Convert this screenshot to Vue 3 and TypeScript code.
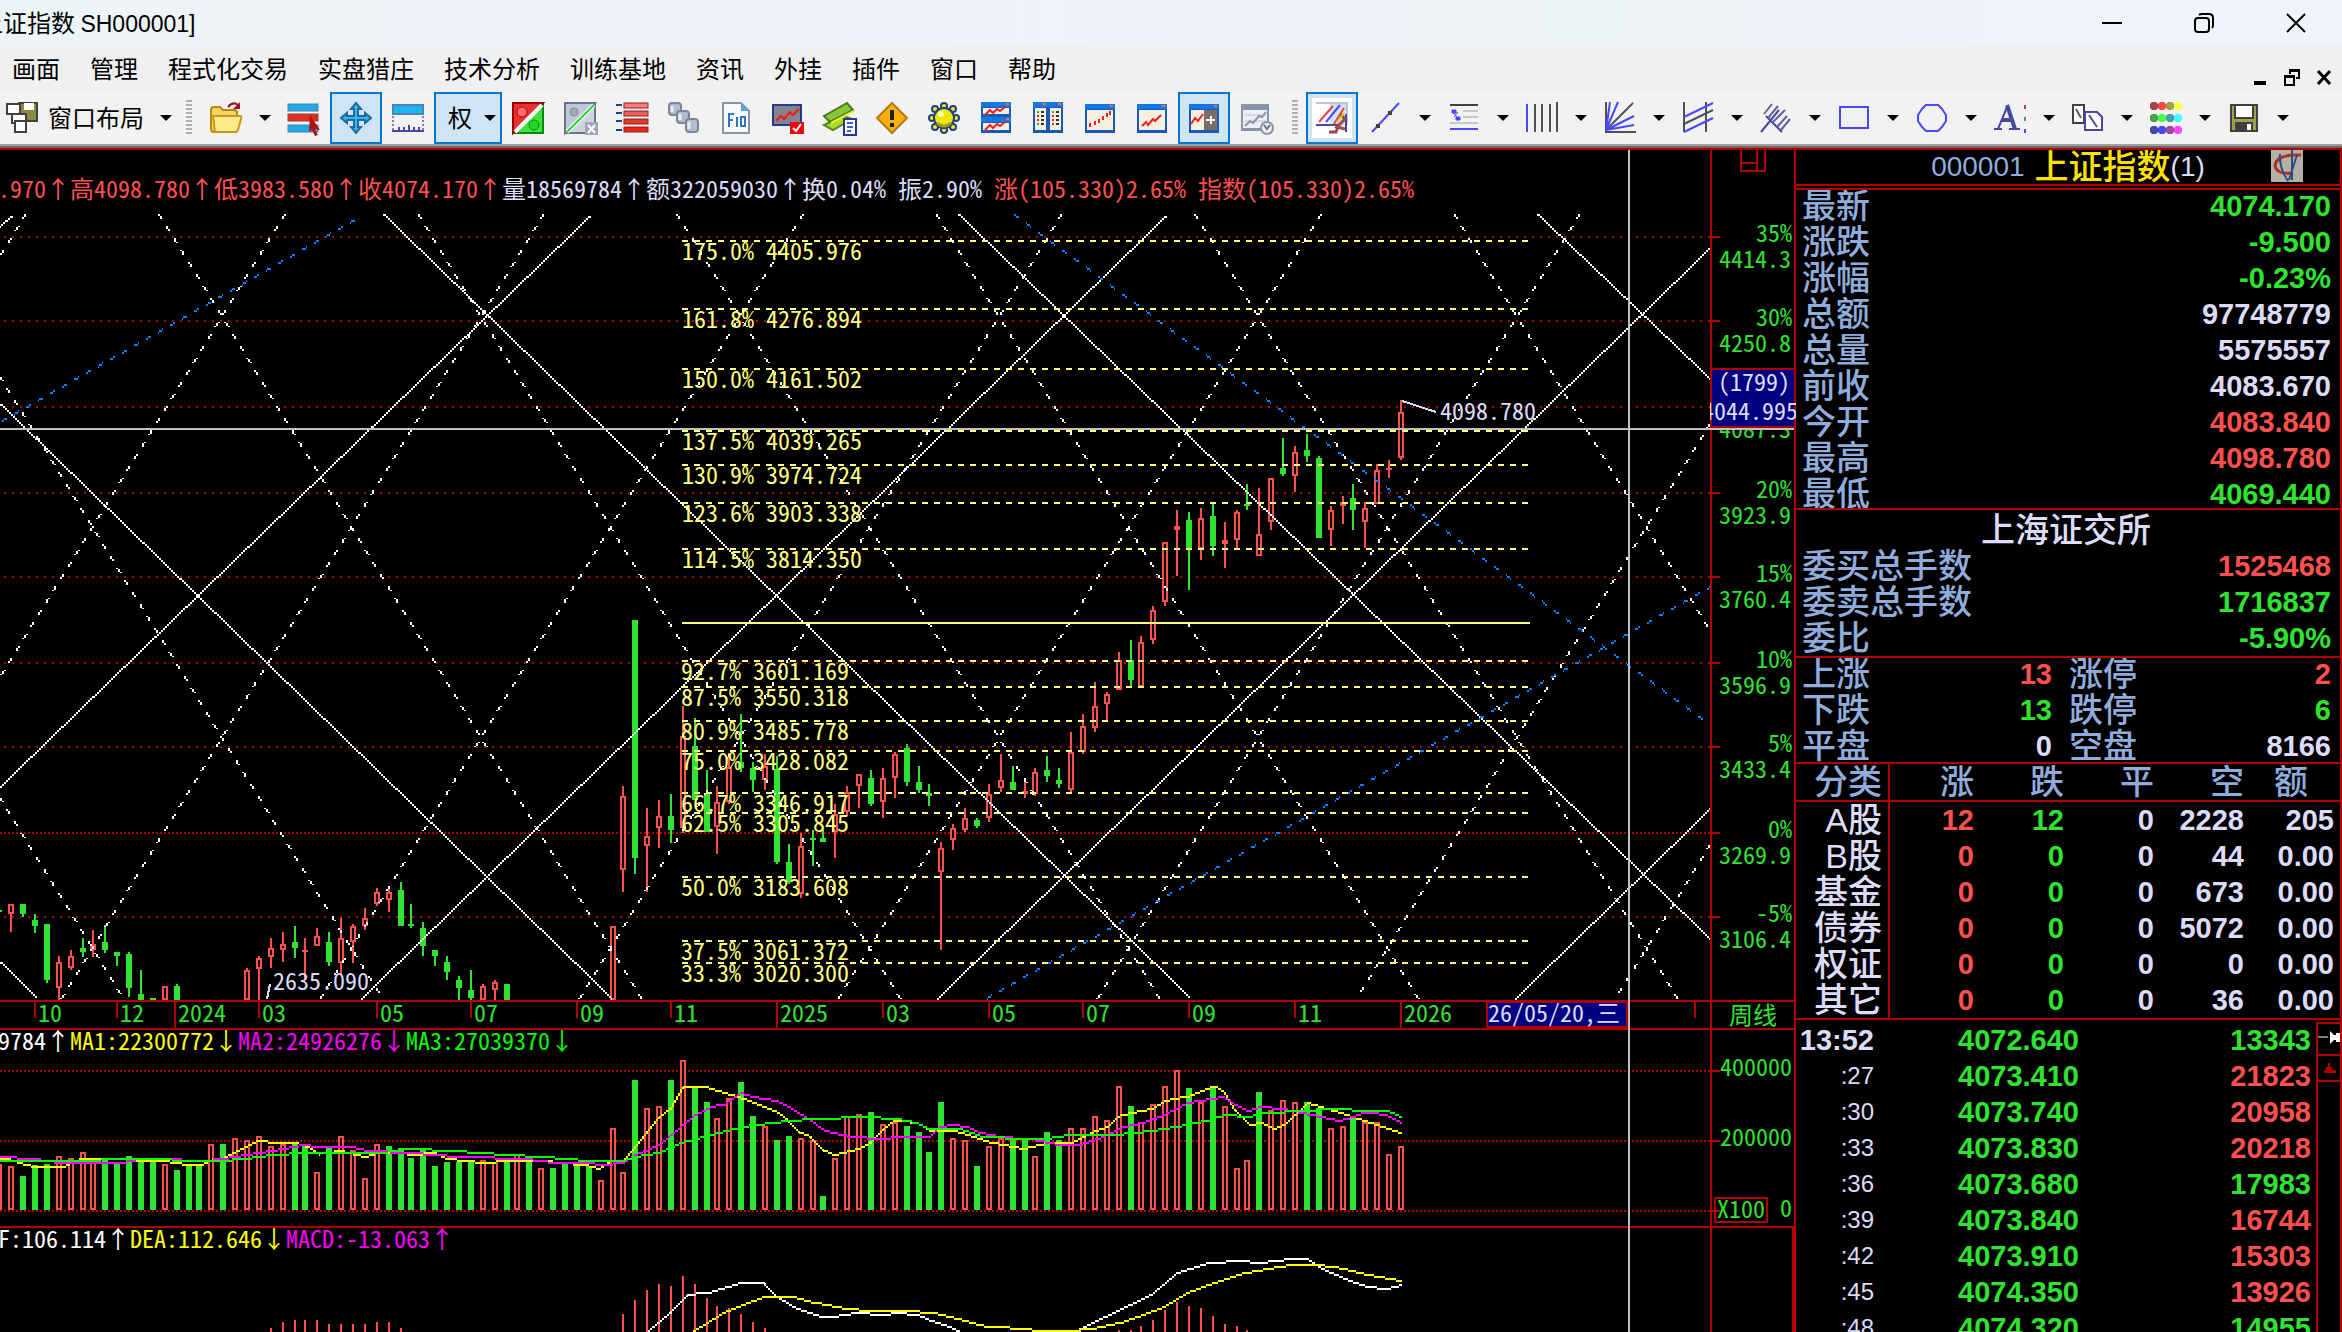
<script setup lang="ts">
interface Candle {
  x: number
  high: number
  top: number
  bottom: number
  low: number
  up: boolean
}

interface Tool {
  id: string
  art: string
  menu?: boolean
  active?: boolean
}

const menus = ['画面', '管理', '程式化交易', '实盘猎庄', '技术分析', '训练基地', '资讯', '外挂', '插件', '窗口', '帮助']

/* ---------- toolbar icons, drawn on a 32 x 32 grid ---------- */
const trend = (x: number, y: number) =>
  `<path d="M${x} ${y + 10}l4-4 2 3 5-6 2 2 6-6" fill="none" stroke="#f02020" stroke-width="2"/>`
const frame = (x: number, y: number, w: number, h: number) =>
  `<rect x="${x}" y="${y}" width="${w}" height="${h}" fill="#1c58b8"/><rect x="${x}" y="${y}" width="${w}" height="5" fill="#1078e0"/><rect x="${x + w - 5}" y="${y + 1}" width="3" height="2" fill="#ff7020"/><rect x="${x + 2}" y="${y + 6}" width="${w - 4}" height="${h - 9}" fill="#f6f0e0"/>`
const percent = (a: string, b: string, c: string, d: string) =>
  `<rect x="1" y="1" width="30" height="30" fill="${b}" stroke="${d}" stroke-width="2"/><path d="M1 31V1h30z" fill="${a}" stroke="${c}" stroke-width="2"/><path d="M3 30L30 3" stroke="#fff" stroke-width="4"/>`
const list = (x: number, y: number, fill: string) =>
  `<rect x="${x}" y="${y}" width="24" height="5" fill="${fill}" stroke="#902020"/>`

const icons: Record<string, string> = {
  layout:
    '<path d="M13 1h18v18H13z" fill="#8c8c40" stroke="#404040" stroke-width="2"/><path d="M18 1h10v7H18z" fill="#fff"/><path d="M1 2h13v10H1z" fill="#fff" stroke="#404040" stroke-width="2"/><path d="M6 12h14v9H6z" fill="#fff" stroke="#404040" stroke-width="2"/><path d="M9 19h11v11H9z" fill="#fff" stroke="#404040" stroke-width="2"/>',
  open:
    '<path d="M1 8q0-3 3-3h6l3 3h11q3 0 3 3v16q0 3-3 3H4q-3 0-3-3z" fill="#f7d560" stroke="#b58a12" stroke-width="2"/><path d="M3 14h27q2 0 1 3l-3 11q-1 2-3 2H5z" fill="#ffe98a" stroke="#c59a18" stroke-width="2"/><path d="M18 5q5-6 10-2" fill="none" stroke="#a01020" stroke-width="2"/><path d="M30 0v7h-7z" fill="#a01020"/>',
  rows:
    '<rect y="2" width="30" height="7" fill="#20a8e8" stroke="#4a86a8"/><rect y="12" width="30" height="7" fill="#e03020" stroke="#90403a"/><rect y="23" width="30" height="7" fill="#20a8e8" stroke="#4a86a8"/><path d="M22 13l10 15-5-1 3 6-3 1-3-6-3 2z" fill="#b01018"/>',
  move:
    '<path d="M16 1l5 6h-3v7h7v-3l6 5-6 5v-3h-7v7h3l-5 6-5-6h3v-7H7v3l-6-5 6-5v3h7V7h-3z" fill="#38b4ee" stroke="#1b6c9c" stroke-width="2"/>',
  ruler:
    '<rect x="1" y="3" width="30" height="9" fill="#20b4f4" stroke="#4a86b0" stroke-width="2"/><path d="M1 14v16M31 14v16" stroke="#8080c0" stroke-width="2" stroke-dasharray="2 2"/><path d="M0 29h32M7 29v-4M12 29v-4M17 29v-6M22 29v-4M27 29v-4" stroke="#4848a0" stroke-width="2"/>',
  ratio: percent('#e83030', '#40e040', '#a00000', '#008a10') + '<circle cx="10" cy="10" r="5" fill="#ff7070" stroke="#b00000"/><circle cx="22" cy="23" r="5" fill="#20d828" stroke="#008a10"/>',
  ratioOff:
    percent('#c2c8d6', '#cfd4e0', '#68748c', '#68748c') + '<path d="M3 30L30 3" stroke="#20d828" stroke-width="2"/><circle cx="10" cy="10" r="4" fill="#a4acbe" stroke="#808898"/><rect x="21" y="20" width="13" height="13" fill="#a0a8b8"/><path d="M24 23l7 8M31 23l-7 8" stroke="#fff" stroke-width="2"/>',
  list:
    list(8, 1, '#ff7a7a') + list(8, 9, '#f06060') + list(8, 17, '#e03c20') + list(8, 25, '#f02410') + '<path d="M0 3h6M0 11h6M0 19h6M0 28h6" stroke="#104a80" stroke-width="2"/>',
  chain:
    '<g fill="#b4bccc" stroke="#7a86a0" stroke-width="2"><rect x="1" y="1" width="12" height="12" rx="3"/><rect x="9" y="9" width="12" height="12" rx="3"/><rect x="18" y="17" width="12" height="13" rx="3"/></g><path d="M4 4v6M12 12v6M21 20v7" stroke="#e8ecf4" stroke-width="3"/>',
  document:
    '<path d="M3 1h18l8 8v22H3z" fill="#f8fafc" stroke="#8694a4" stroke-width="2"/><path d="M21 1l8 8h-8z" fill="#58a0d8"/><path d="M9 25V12h5M9 18h4M17 15v10M21 15h4v9h-4z" fill="none" stroke="#2a78c8" stroke-width="2"/>',
  monitor:
    '<rect x="1" y="3" width="28" height="20" fill="#84848c" stroke="#283890" stroke-width="2"/><path d="M4 19l5-5 3 3 6-7 3 3 6-6" fill="none" stroke="#f01818" stroke-width="2"/><rect x="18" y="20" width="14" height="12" fill="#e80810"/><path d="M21 26l3 3 5-7" fill="none" stroke="#fff" stroke-width="2"/>',
  cards:
    '<path d="M0 23l20-9 8 3-19 11z" fill="#a8dc28" stroke="#588820" stroke-width="2"/><path d="M0 14L23 1l6 7L6 20z" fill="#88c838" stroke="#487818" stroke-width="2"/><path d="M7 21l23-12" stroke="#f4e838" stroke-width="2"/><rect x="20" y="17" width="12" height="16" fill="#fff" stroke="#283890" stroke-width="2"/><path d="M23 21h6M23 25h6M23 29h4" stroke="#4060c0" stroke-width="2"/>',
  warning:
    '<path d="M16 1l15 15-15 15L1 16z" fill="#fcb010" stroke="#b07c10" stroke-width="2"/><path d="M16 8v10" stroke="#202020" stroke-width="4"/><path d="M14 21h4v4h-4z" fill="#202020"/>',
  sun:
    '<g fill="#f8f000" stroke="#20408c" stroke-width="2"><circle cx="16" cy="4" r="3"/><circle cx="7" cy="7" r="3"/><circle cx="25" cy="7" r="3"/><circle cx="4" cy="16" r="3"/><circle cx="28" cy="16" r="3"/><circle cx="7" cy="25" r="3"/><circle cx="25" cy="25" r="3"/><circle cx="16" cy="28" r="3"/></g><circle cx="16" cy="16" r="10" fill="#f0e800" stroke="#20408c" stroke-width="2"/><path d="M9 21q7 6 14 0" fill="none" stroke="#a8a000" stroke-width="3"/><circle cx="13" cy="12" r="3" fill="#ffffa0"/>',
  splitH: frame(1, 0, 30, 15) + frame(1, 15, 30, 16) + '<path d="M5 13l5-5 3 3 4-4 3 2 5-4M5 28l5-5 3 3 4-4 3 2 5-4" fill="none" stroke="#f02020" stroke-width="2"/>',
  splitV: frame(1, 0, 15, 31) + frame(16, 0, 15, 31) + '<path d="M5 10h2M20 10h2M5 22h2" stroke="#20c030" stroke-width="2"/><path d="M5 14h2M5 18h2M20 14h2M20 18h2M20 22h2" stroke="#f02020" stroke-width="2"/><path d="M9 10h3M9 14h3M9 18h3M9 22h3M24 10h3M24 14h3M24 18h3M24 22h3" stroke="#303030" stroke-width="2"/>',
  chartBars: frame(1, 2, 30, 29) + '<path d="M6 25v-4M11 23v-4M15 21v-4M19 18v-4M23 15v-4M26 13v-4" stroke="#f02020" stroke-width="2"/>',
  chartLine: frame(1, 2, 30, 29) + trend(6, 14),
  sidePane: frame(1, 2, 30, 29) + '<rect x="16" y="8" width="13" height="20" fill="#787068"/><path d="M3 22l4-6 3 3 5-7" fill="none" stroke="#f02020" stroke-width="2"/><path d="M18 18h9M23 14v8" stroke="#fff" stroke-width="2"/>',
  clock:
    '<rect x="1" y="2" width="28" height="27" fill="#8894a8"/><rect x="3" y="8" width="24" height="18" fill="#eceef4"/><path d="M4 13h22M4 19h22" stroke="#c4c8d4"/><path d="M5 24l5-5 3 2 6-7 3 1 4-5" fill="none" stroke="#8894a8" stroke-width="2"/><circle cx="27" cy="26" r="6" fill="#eceef4" stroke="#8894a8" stroke-width="2"/><path d="M24 23l3 4 3-4" fill="none" stroke="#68748c" stroke-width="2"/>',
  sketch:
    '<path d="M-4-4h40v40h-40z" fill="#fff"/><path d="M14 0h17v24H14z" fill="#cce4f6"/><path d="M0 1h31v22" fill="none" stroke="#c4c4c4" stroke-width="2"/><path d="M3 20L17 4" stroke="#f04040" stroke-width="2"/><path d="M10 20L24 3" stroke="#4848ff" stroke-width="2"/><path d="M0 23h22M30 12v18" fill="none" stroke="#4848a0" stroke-width="2"/><path d="M18 22L28 6" stroke="#f04040" stroke-width="2"/><path d="M13 30h7l3-8M24 12l5 5-8 8 8 2" fill="none" stroke="#a04848" stroke-width="3"/><path d="M21 20l7-9" stroke="#d8c820" stroke-width="2"/>',
  segment:
    '<path d="M2 30L29 1" stroke="#4848ff" stroke-width="2"/><path d="M6 22h4v4H6zM18 9h4v4h-4z" fill="#404040"/>',
  levels:
    '<path d="M2 3h28" stroke="#404040" stroke-width="2"/><path d="M15 9h15M15 15h15M2 21h28" stroke="#c8c8c8" stroke-width="2"/><path d="M2 27h28" stroke="#4848ff" stroke-width="2"/><path d="M4 8h4v3H4zM4 8l6 9M10 10l-4 5M8 15h4v3H8z" fill="#4848ff" stroke="#4848ff"/>',
  verticals:
    '<path d="M1 2v28" stroke="#4848ff" stroke-width="2"/><path d="M9 2v28M16 2v28M24 2v28M31 0v30" stroke="#505050" stroke-width="2"/>',
  fan:
    '<path d="M2 0v30h30" fill="none" stroke="#505050" stroke-width="2"/><path d="M2 28L29 1" stroke="#505050" stroke-width="2"/><path d="M2 28L6 0M2 28L14 0M2 28l28-14M2 28l28-5" stroke="#4848ff" stroke-width="2"/>',
  channel:
    '<path d="M2 0v30M24 0v30" stroke="#505050" stroke-width="2"/><path d="M2 15L31 1M2 30l29-14" stroke="#4848ff" stroke-width="2"/><path d="M2 22L31 8" stroke="#505050" stroke-width="2"/>',
  pitchfork:
    '<path d="M1 30L19 8M6 14l16 16" stroke="#4848a0" stroke-width="2"/><path d="M4 12l8-10M8 16L18 4M12 21L25 8M17 25l10-11M21 28l9-11" stroke="#6060a0" stroke-width="2"/>',
  rect: '<path d="M2 5h28v21H2z" fill="none" stroke="#4848ff" stroke-width="2"/>',
  ellipse: '<path d="M10 3h12l4 4 4 6v6l-4 6-4 4H10l-4-4-4-6v-6l4-6z" fill="none" stroke="#4848ff" stroke-width="2"/>',
  text:
    '<path d="M4 27l9-22" fill="none" stroke="#4848a0" stroke-width="2"/><path d="M13 3l8 24M8 18h10" fill="none" stroke="#4848a0" stroke-width="4"/><path d="M0 27h8M15 27h11" stroke="#4848a0" stroke-width="2"/><path d="M31 3v4" stroke="#a04848" stroke-width="2"/><path d="M31 15v4" stroke="#48a048" stroke-width="2"/><path d="M31 27v4" stroke="#4848ff" stroke-width="2"/>',
  copy:
    '<path d="M1 3h11v18H1z" fill="#fff" stroke="#404040" stroke-width="2"/><path d="M4 7l5 9" stroke="#606060" stroke-width="2"/><path d="M13 10h12l5 5v13H13z" fill="#fff" stroke="#4848a0" stroke-width="2"/><path d="M17 13l8 12" stroke="#4848a0" stroke-width="2"/>',
  colors: ['#a04848,#ff4848,#a0a048,#ffff48', '#48a048,#48ff48,#48a0a0,#48ffff', '#4848a0,#4848ff,#a048a0,#ff48ff']
    .map((row, r) => row.split(',').map((c, i) => `<path d="M${i * 8} ${r * 12 + 2}l2-2h4l2 2v4l-2 2h-4l-2-2z" fill="${c}"/>`).join(''))
    .join(''),
  save:
    '<path d="M3 3h26v26H3z" fill="#a0a048" stroke="#404040" stroke-width="2"/><path d="M7 3h18v13H7z" fill="#fff" stroke="#404040" stroke-width="2"/><path d="M7 20h18v9H7z" fill="#404040"/><path d="M19 22h4v6h-4z" fill="#fff"/>',
}

const chartTools: Tool[] = [
  { id: 'ratio', art: 'ratio' },
  { id: 'ratio-off', art: 'ratioOff' },
  { id: 'list', art: 'list' },
  { id: 'chain', art: 'chain' },
  { id: 'document', art: 'document' },
  { id: 'monitor', art: 'monitor' },
  { id: 'cards', art: 'cards' },
  { id: 'warning', art: 'warning' },
  { id: 'settings', art: 'sun' },
  { id: 'split-rows', art: 'splitH' },
  { id: 'split-columns', art: 'splitV' },
  { id: 'bars', art: 'chartBars' },
  { id: 'line', art: 'chartLine' },
  { id: 'side-pane', art: 'sidePane', active: true },
  { id: 'replay', art: 'clock' },
]
const drawTools = ['segment', 'levels', 'verticals', 'fan', 'channel', 'pitchfork', 'rect', 'ellipse', 'text', 'copy', 'colors', 'save']

/* ---------- pixel-stepped strokes ---------- */
const snap = (v: number) => Math.floor(v / 2) * 2

function steps(points: number[][], on = 0, period = 0): string {
  let d = ''
  for (let p = 0; p + 1 < points.length; p++) {
    let [x1, y1] = points[p]
    let [x2, y2] = points[p + 1]
    const steep = Math.abs(y2 - y1) > Math.abs(x2 - x1)
    if (steep ? y1 > y2 : x1 > x2) [x1, y1, x2, y2] = [x2, y2, x1, y1]
    const from = steep ? y1 : x1
    const to = steep ? y2 : x2
    const base = steep ? x1 : y1
    const slope = to === from ? 0 : ((steep ? x2 : y2) - base) / (to - from)
    let start = from
    let cross = snap(base)
    let drawing = true
    const flush = (end: number) => {
      if (drawing && end > start) {
        d += steep ? `M${cross} ${start}h2v${end - start}h-2z` : `M${start} ${cross}h${end - start}v2h${start - end}z`
      }
    }
    for (let t = from; t <= to; t++) {
      const c = snap(base + slope * (t - from))
      const visible = period === 0 || (t - from) % period < on
      if (c !== cross || visible !== drawing) {
        flush(t)
        start = t
        cross = c
        drawing = visible
      }
    }
    flush(Math.round(to) + 1)
  }
  return d
}

const pairs = (text: string) => text.split(',').map((p) => p.trim().split(' ').map(Number))

/* ---------- main pane ---------- */
const gridRows = [237, 321, 407, 493, 577, 663, 747, 917]

const trendLines = [
  '0 226,12 216', '0 787,590 216', '361 999,1166 216', '937 999,1710 248', '1515 999,1710 809',
  '0 962,36 997', '0 404,611 998', '383 214,1189 997', '958 214,1710 939', '1537 214,1710 379',
].map((t) => steps(pairs(t))).join('')

const SLOPE = 1.626
function gannFan(): string {
  let d = ''
  for (let k = -2; k <= 7; k++) {
    const x0 = 222 + 259 * k
    for (const dir of [1, -1]) {
      const at = (y: number) => x0 + (dir * (y - 316)) / SLOPE
      let yTop = 214
      let yBottom = 998
      for (const edge of [0, 1710]) {
        const y = Math.round(316 + dir * (edge - x0) * SLOPE)
        const enters = (edge === 0) === (dir === 1)
        if (enters) yTop = Math.max(yTop, y)
        else yBottom = Math.min(yBottom, y)
      }
      if (yBottom - yTop > 4) d += steps([[at(yTop), yTop], [at(yBottom), yBottom]], 5, 12)
    }
  }
  return d
}
const gannLines = gannFan()
const blueLines = ['2 421,358 218', '1014 215,1703 720', '987 998,1710 587'].map((t) => steps(pairs(t), 5, 12)).join('')

const fibs: [number, string, number][] = [
  [241, '175.0% 4405.976', 682], [309, '161.8% 4276.894', 682], [369, '150.0% 4161.502', 682],
  [431, '137.5% 4039.265', 682], [465, '130.9% 3974.724', 682], [503, '123.6% 3903.338', 682],
  [549, '114.5% 3814.350', 682], [661, '92.7% 3601.169', 681], [687, '87.5% 3550.318', 681],
  [721, '80.9% 3485.778', 681], [751, '75.0% 3428.082', 681], [793, '66.7% 3346.917', 681],
  [813, '62.5% 3305.845', 681], [877, '50.0% 3183.608', 681], [941, '37.5% 3061.372', 681],
  [963, '33.3% 3020.300', 681],
]

const LAST = 116
const PITCH = 11.776
const weekX = (i: number) => 2 * Math.floor((1401 - PITCH * (LAST - i)) / 2) + 1

/* week, high, body top, body bottom, low, direction */
const candleData = `-3 910 910 912 912 g,-2 904 904 914 932 r,-1 904 904 914 917 g,0 914 920 926 933 g,1 924 924 980 983 g,
2 956 962 988 1000 r,3 950 956 968 970 r,4 938 948 952 957 g,5 930 944 950 957 r,6 925 942 950 953 g,7 952 952 956 966 g,
8 952 954 988 997 g,9 970 994 1000 1000 g,10 998 998 1000 1000 g,11 986 986 1000 1000 r,12 984 986 1000 1000 g,
18 968 970 1000 1000 r,19 956 958 969 1000 r,20 938 948 957 968 r,21 932 944 950 962 r,22 926 942 948 958 g,
23 938 950 952 980 r,24 928 936 946 946 r,25 932 942 962 966 g,26 918 938 963 975 r,27 924 926 942 963 r,
28 908 918 926 930 r,29 888 892 904 906 r,30 889 892 900 912 r,31 882 890 926 926 g,32 904 924 926 928 g,
33 922 928 946 956 g,34 950 950 956 966 g,35 956 962 972 980 g,36 976 980 988 1000 g,37 970 990 998 1000 g,
38 984 986 1000 1000 r,39 980 982 990 1000 r,40 984 984 1000 1000 g,49 926 926 1000 1000 r,50 786 796 870 892 r,
51 620 620 858 874 g,52 808 836 846 892 r,53 800 816 828 848 r,54 794 816 830 843 g,55 706 736 828 833 r,
56 718 746 800 800 g,57 770 793 832 832 g,58 786 802 827 854 r,59 753 767 802 804 r,60 714 762 768 772 g,
61 762 768 780 792 g,62 754 766 780 790 r,63 756 769 862 864 g,64 844 862 882 884 g,65 833 846 894 898 r,
66 830 838 840 866 g,67 830 838 842 842 g,68 804 814 832 858 r,69 786 792 812 816 r,70 774 774 786 808 r,
71 770 778 804 806 g,72 768 778 802 818 r,73 752 754 778 798 r,74 744 748 782 786 g,75 766 782 790 793 g,
76 784 793 796 806 g,77 842 848 872 950 r,78 824 828 840 850 r,79 808 818 830 832 r,80 818 820 826 828 g,
81 784 794 818 822 r,82 754 780 788 792 r,83 766 782 790 790 g,84 780 791 794 798 r,85 768 772 794 796 r,
86 756 770 776 782 g,87 768 780 784 788 g,88 732 752 790 792 r,89 714 726 752 754 r,90 682 706 728 732 r,
91 692 694 704 720 r,92 652 660 690 690 r,93 640 660 680 687 g,94 636 642 687 687 r,95 606 610 640 644 r,
96 542 542 602 606 r,97 510 526 530 576 r,98 512 520 549 590 g,99 508 518 549 560 r,100 503 516 546 556 g,
101 522 540 544 568 r,102 510 512 540 548 r,103 484 504 506 510 g,104 488 534 556 556 r,105 478 478 522 530 r,
106 438 468 474 476 g,107 446 452 476 492 r,108 434 450 456 462 g,109 456 458 538 538 g,110 506 510 530 546 r,
111 496 502 506 524 r,112 484 498 510 530 g,113 502 508 522 548 r,114 464 470 504 504 r,115 460 468 470 478 r,
116 400 412 458 460 r`

const candles: Candle[] = candleData.split(',').map((row) => {
  const [week, high, top, bottom, low, dir] = row.trim().split(' ')
  return { x: weekX(+week), high: +high, top: +top, bottom: +bottom, low: +low, up: dir === 'r' }
})

const dates: [number, string][] = [
  [35, '10'], [117, '12'], [175, '2024'], [259, '03'], [377, '05'], [471, '07'], [577, '09'], [671, '11'],
  [777, '2025'], [883, '03'], [989, '05'], [1083, '07'], [1189, '09'], [1295, '11'], [1401, '2026'], [1695, ''],
]

/* ---------- volume pane: falling weeks are negative ---------- */
const volumes = [
  46, 44, -34, -45, -46, 54, 52, 58, 50, -50, -46, -54, -50, -48, 46, -40, -46, -46, 66, -66, 72, 70, 74, 64, 66, -66, -64, 38,
  -62, 74, 60, 32, 66, -64, -62, -52, -60, -44, -48, -48, -50, 50, 48, -50, 56, -50, 42, -42, -46, -46, -44, 30, 82, 38, -130,
  102, 104, -130, 150, -124, -108, 92, 112, -128, -94, 84, -70, -74, 72, 70, -14, 52, 94, 96, -98, 86, 88, -84, -78, -58, -108,
  72, 70, -44, 64, 72, -72, -70, 54, -78, -70, 82, 82, 94, 90, 124, -104, 88, 106, 124, 140, -122, 108, -124, 104, 42, 50,
  -118, 100, 110, 108, -108, -102, 82, 84, -94, 88, 88, 56, 64,
].map((v, n) => ({ x: weekX(n - 3), h: Math.abs(v), up: v > 0 }))

const ma1 = steps(pairs('0 1158,11 1160,23 1164,34 1167,63 1167,81 1159,122 1159,136 1160,163 1161,188 1165,201 1165,211 1160,223 1158,237 1151,259 1140,272 1143,295 1143,308 1147,319 1154,341 1151,365 1157,377 1153,399 1152,411 1155,435 1153,447 1159,484 1163,517 1160,541 1161,565 1163,589 1166,599 1169,611 1161,623 1161,635 1147,647 1132,659 1117,671 1108,683 1087,705 1087,741 1098,777 1112,789 1121,799 1132,811 1137,823 1150,834 1155,859 1149,870 1143,883 1129,895 1120,917 1123,929 1130,951 1130,965 1134,989 1142,1024 1149,1047 1143,1071 1143,1095 1131,1107 1127,1119 1116,1141 1111,1152 1109,1165 1101,1189 1096,1214 1086,1225 1093,1235 1110,1250 1125,1261 1123,1274 1129,1284 1125,1295 1115,1307 1103,1341 1113,1377 1125,1401 1133'))
const ma2 = steps(pairs('0 1157,34 1159,54 1162,122 1163,140 1159,163 1159,201 1161,223 1159,246 1155,272 1151,304 1145,317 1147,352 1147,368 1151,411 1153,435 1155,458 1157,495 1158,525 1159,548 1162,589 1163,601 1165,623 1163,635 1155,659 1145,671 1135,695 1115,711 1107,725 1104,741 1093,753 1097,777 1101,789 1107,811 1121,825 1131,851 1137,883 1139,906 1136,929 1137,940 1127,953 1125,967 1127,980 1133,1001 1137,1035 1140,1060 1145,1082 1144,1103 1137,1123 1127,1143 1123,1164 1115,1187 1103,1223 1097,1235 1105,1248 1111,1261 1107,1283 1109,1307 1114,1339 1121,1353 1117,1365 1112,1386 1115,1401 1123'))
const ma3 = steps(pairs('0 1161,91 1161,109 1159,163 1159,181 1161,217 1161,245 1159,272 1155,304 1153,380 1153,411 1149,453 1151,507 1155,543 1157,589 1161,623 1161,634 1157,659 1153,683 1142,711 1135,741 1127,788 1121,815 1119,865 1117,897 1119,917 1123,929 1129,960 1129,980 1136,1005 1138,1051 1138,1069 1135,1123 1134,1152 1131,1187 1125,1209 1120,1225 1115,1248 1117,1264 1113,1304 1111,1332 1109,1372 1111,1390 1112,1401 1117'))

/* ---------- MACD pane ---------- */
const macdRuns: [number, number[]][] = [
  [20, [1328, 1322, 1320, 1320, 1320, 1324, 1324, 1324, 1324, 1322, 1322, 1328]],
  [50, [1314, 1300, 1290, 1284, 1286, 1276, 1284, 1298, 1306, 1308, 1314, 1322, 1328]],
  [92, [1330, 1330, 1326, 1320, 1310, 1302, 1306, 1308, 1316, 1324, 1326, 1330]],
]
const macdBars = macdRuns.flatMap(([first, tops]) => tops.map((y, n) => ({ x: weekX(first + n), y })))
const dif = [
  '647 1332,659 1322,671 1312,687 1295,711 1292,741 1283,764 1283,777 1297,797 1309,822 1317,838 1316,856 1313,883 1315,897 1313,917 1315,929 1320,949 1327,960 1332',
  '1078 1330,1107 1316,1132 1304,1152 1294,1164 1284,1177 1273,1209 1263,1241 1261,1259 1263,1291 1259,1307 1259,1322 1269,1350 1281,1368 1287,1386 1289,1395 1287,1401 1285',
].map((t) => steps(pairs(t))).join('')
const dea = steps(pairs('692 1332,707 1323,725 1312,743 1305,764 1297,793 1297,811 1302,847 1309,870 1311,910 1311,938 1314,965 1321,987 1327,1010 1328,1042 1331,1073 1331,1096 1328,1123 1322,1143 1315,1164 1307,1187 1293,1214 1283,1241 1274,1268 1269,1291 1265,1318 1265,1339 1268,1368 1275,1401 1281'))

/* ---------- price axis ---------- */
const axisPercents: [number, string][] = [
  [234, '35%'], [318, '30%'], [490, '20%'], [574, '15%'], [660, '10%'], [744, '5%'], [830, '0%'], [914, '-5%'],
]
const axisPrices: [number, string][] = [
  [260, '4414.3'], [344, '4250.8'], [430, '4087.3'], [516, '3923.9'], [600, '3760.4'], [686, '3596.9'], [770, '3433.4'],
  [856, '3269.9'], [940, '3106.4'],
]
const axisTicks = [237, 321, 493, 577, 663, 747, 833, 917, 1071, 1141, 1211]

/* ---------- quote panel ---------- */
const quote: [string, string, string][] = [
  ['最新', '4074.170', 'down'], ['涨跌', '-9.500', 'down'], ['涨幅', '-0.23%', 'down'], ['总额', '97748779', 'flat'],
  ['总量', '5575557', 'flat'], ['前收', '4083.670', 'flat'], ['今开', '4083.840', 'up'], ['最高', '4098.780', 'up'],
  ['最低', '4069.440', 'down'],
]
const orders: [string, string, string][] = [
  ['委买总手数', '1525468', 'up'], ['委卖总手数', '1716837', 'down'], ['委比', '-5.90%', 'down'],
]
const breadth: [string, string, string, string, string][] = [
  ['上涨', '13', '涨停', '2', 'up'], ['下跌', '13', '跌停', '6', 'down'], ['平盘', '0', '空盘', '8166', 'flat'],
]
const categories: string[][] = [
  ['A股', '12', '12', '0', '2228', '205'], ['B股', '0', '0', '0', '44', '0.00'], ['基金', '0', '0', '0', '673', '0.00'],
  ['债券', '0', '0', '0', '5072', '0.00'], ['权证', '0', '0', '0', '0', '0.00'], ['其它', '0', '0', '0', '36', '0.00'],
]
const ticks: [string, string, string, string][] = [
  ['13:52', '4072.640', '13343', 'down'], [':27', '4073.410', '21823', 'up'], [':30', '4073.740', '20958', 'up'],
  [':33', '4073.830', '20218', 'up'], [':36', '4073.680', '17983', 'down'], [':39', '4073.840', '16744', 'up'],
  [':42', '4073.910', '15303', 'up'], [':45', '4074.350', '13926', 'up'], [':48', '4074.320', '14955', 'down'],
]
</script>

<template>
  <div class="app">
    <header class="titlebar">
      <h1 class="title">上证指数 <span>SH000001]</span></h1>
      <div class="window-buttons">
        <button type="button" aria-label="最小化"><svg width="20" height="20"><path d="M0 10h20" /></svg></button>
        <button type="button" aria-label="还原"><svg width="20" height="20"><rect x="1" y="5" width="14" height="14" rx="3" /><path d="M5 2q1-1 3-1h7q4 0 4 4v7q0 2-1 3" /></svg></button>
        <button type="button" aria-label="关闭"><svg width="20" height="20"><path d="M1 1l18 18M19 1L1 19" /></svg></button>
      </div>
    </header>

    <nav class="menubar">
      <button v-for="m in menus" :key="m" type="button">{{ m }}</button>
      <div class="mdi-buttons">
        <button type="button" aria-label="最小化子窗口"><svg width="16" height="20"><path d="M2 14h12v4H2z" fill="#000" /></svg></button>
        <button type="button" aria-label="还原子窗口"><svg width="16" height="20"><path d="M6 3h9v8h-3M6 3v4M1 9h9v9H1z" fill="none" stroke="#000" stroke-width="2" /><path d="M5 2h11v3H5zM0 8h11v3H0z" fill="#000" /></svg></button>
        <button type="button" aria-label="关闭子窗口"><svg width="16" height="20"><path d="M2 4l12 13M14 4L2 17" fill="none" stroke="#000" stroke-width="3" /></svg></button>
      </div>
    </nav>

    <div class="toolbar">
      <button type="button" class="layout">
        <svg class="icon" viewBox="0 0 32 32" v-html="icons.layout"></svg><span>窗口布局</span><i class="caret"></i>
      </button>
      <i class="grip first"></i>
      <div class="split">
        <button type="button" aria-label="open"><svg class="icon" viewBox="0 0 32 32" v-html="icons.open"></svg></button>
        <button type="button" class="drop" aria-label="open menu"><i class="caret"></i></button>
      </div>
      <button type="button" class="tool" aria-label="rows"><svg class="icon" viewBox="0 0 32 32" v-html="icons.rows"></svg></button>
      <button type="button" class="tool active" aria-label="move"><svg class="icon" viewBox="0 0 32 32" v-html="icons.move"></svg></button>
      <button type="button" class="tool" aria-label="ruler"><svg class="icon" viewBox="0 0 32 32" v-html="icons.ruler"></svg></button>
      <button type="button" class="rights active"><span>权</span><i class="caret"></i></button>
      <button v-for="t in chartTools" :key="t.id" type="button" class="tool" :class="{ active: t.active }" :aria-label="t.id">
        <svg class="icon" viewBox="0 0 32 32" v-html="icons[t.art]"></svg>
      </button>
      <i class="grip"></i>
      <button type="button" class="tool active" aria-label="sketch"><svg class="icon" viewBox="0 0 32 32" v-html="icons.sketch"></svg></button>
      <div class="draw-tools">
        <div v-for="d in drawTools" :key="d" class="split">
          <button type="button" :aria-label="d"><svg class="icon" viewBox="0 0 32 32" v-html="icons[d]"></svg></button>
          <button type="button" class="drop" :aria-label="d + ' menu'"><i class="caret"></i></button>
        </div>
      </div>
    </div>

    <main class="workspace">
      <svg class="plot" viewBox="0 150 1710 1182" preserveAspectRatio="xMinYMin slice">
        <text class="t light" x="-2" y="198"><tspan class="up">.970↑高4098.780↑低3983.580↑收4074.170↑</tspan>量18569784↑额322059030↑换0.04% 振2.90% <tspan class="up">涨(105.330)2.65% 指数(105.330)2.65%</tspan></text>

        <g class="dots">
          <path v-for="y in gridRows" :key="y" :d="`M4 ${y}H1710`" />
          <path class="dense" d="M0 833H1710M0 1071H1710M0 1141H1710M0 1211H1710" />
        </g>

        <g v-for="(c, n) in candles" :key="'c' + n" :class="c.up ? 'c-up' : 'c-down'">
          <path :d="`M${c.x} ${c.high}V${c.low}`" />
          <rect v-if="c.up && c.bottom - c.top > 4" :x="c.x - 2" :y="c.top + 1" width="4" :height="c.bottom - c.top - 2" />
          <rect v-else class="solid" :x="c.x - 3" :y="c.top" width="6" :height="c.bottom - c.top" />
        </g>

        <path :d="gannLines" fill="#fff" />
        <path :d="trendLines" fill="#fff" />
        <path :d="blueLines" fill="#0080ff" />

        <g class="fib">
          <path v-for="[y] in fibs" :key="y" :d="`M682 ${y}H1528`" />
          <path class="whole" d="M682 623H1530" />
          <text v-for="[y, label, x] in fibs" :key="label" class="t" :x="x" :y="y + 19">{{ label }}</text>
        </g>

        <path d="M1402 401L1436 412M270 984L267 999" stroke="#dcdcf8" stroke-width="2" />
        <text class="t light" x="1440" y="420">4098.780</text>
        <text class="t light" x="273" y="990">2635.090</text>

        <path class="rule" d="M0 1001H1710M0 1029H1710M0 1227H1710" />
        <g v-for="[x, label] in dates" :key="x">
          <path class="rule" :d="`M${x} 1002V${label.length > 2 ? 1028 : 1018}`" />
          <text class="t green" :x="x + 3" y="1022">{{ label }}</text>
        </g>
        <rect x="1487" y="1002" width="140" height="25" fill="#000080" stroke="#b00000" stroke-width="2" />
        <text class="t light" x="1488" y="1022">26/05/20,三</text>

        <text class="t" x="-2" y="1050"><tspan fill="#fff">9784↑</tspan><tspan fill="#ff0">MA1:22300772↓</tspan><tspan fill="#f0f">MA2:24926276↓</tspan><tspan fill="#0f0">MA3:27039370↓</tspan></text>
        <g v-for="(v, n) in volumes" :key="'v' + n" :class="v.up ? 'c-up' : 'c-down'">
          <rect v-if="v.up" :x="v.x - 2" :y="1211 - v.h" width="4" :height="v.h - 2" />
          <rect v-else class="solid" :x="v.x - 3" :y="1210 - v.h" width="6" :height="v.h" />
        </g>
        <path :d="ma1" fill="#ff0" />
        <path :d="ma2" fill="#f0f" />
        <path :d="ma3" fill="#0f0" />

        <text class="t" x="-2" y="1248"><tspan fill="#fff">F:106.114↑</tspan><tspan fill="#ff0">DEA:112.646↓</tspan><tspan fill="#f0f">MACD:-13.063↑</tspan></text>
        <g class="c-up">
          <path v-for="(b, n) in macdBars" :key="'m' + n" :d="`M${b.x} ${b.y}V1332`" />
        </g>
        <path :d="dif" fill="#fff" />
        <path :d="dea" fill="#ff0" />

        <path class="cross" d="M0 429H1710M1629 150V1332" />
      </svg>

      <svg class="axis" viewBox="1710 150 86 1182" preserveAspectRatio="xMinYMin slice">
        <path class="rule" d="M1741 150V171H1765V150M1757 150V171M1741 163H1757" />
        <path v-for="y in axisTicks" :key="y" class="rule" :d="`M1712 ${y}H1720`" />
        <text v-for="[y, label] in axisPrices" :key="label" class="t green" x="1719" :y="y + 8">{{ label }}</text>
        <text v-for="[y, label] in axisPercents" :key="label" class="t green end" x="1792" :y="y + 8">{{ label }}</text>
        <path class="rule" d="M1711 150V1332M1795 150V1332M1710 1001H1796M1710 1029H1796M1710 1227H1796M1793 1228V1332" />
        <rect x="1711" y="369" width="84" height="58" fill="#000080" stroke="#b00000" stroke-width="2" />
        <text class="t light" x="1718" y="391">(1799)</text>
        <text class="t light" x="1702" y="420">4044.995</text>
        <text class="t green" x="1729" y="1024">周线</text>
        <text class="t green end" x="1792" y="1076">400000</text>
        <text class="t green end" x="1792" y="1146">200000</text>
        <text class="t green end" x="1792" y="1217">0</text>
        <rect x="1715" y="1198" width="52" height="24" class="rule" />
        <text class="t green" x="1717" y="1218">X100</text>
        <path class="cross" d="M1710 429H1794" />
      </svg>

      <aside class="panel">
        <h2 class="symbol">
          <span class="name"><b class="code">000001</b><b class="yellow">上证指数</b><b>(1)</b></span>
          <svg width="32" height="32" viewBox="0 0 32 32"><rect width="32" height="32" fill="#b4b0a4" /><path d="M30 5h-8q-16 1-18 10 1 10 18 8" fill="none" stroke="#b03028" stroke-width="3" /><path d="M9 4q-1 14 8 27M21 0v30M26 5L18 30" fill="none" stroke="#2c4c88" stroke-width="2" /></svg>
        </h2>

        <table class="figures quote">
          <tbody>
            <tr v-for="[label, value, tone] in quote" :key="label"><th scope="row">{{ label }}</th><td :class="tone">{{ value }}</td></tr>
          </tbody>
        </table>

        <table class="figures orders">
          <caption>上海证交所</caption>
          <tbody>
            <tr v-for="[label, value, tone] in orders" :key="label"><th scope="row">{{ label }}</th><td :class="tone">{{ value }}</td></tr>
          </tbody>
        </table>

        <table class="figures breadth">
          <tbody>
            <tr v-for="[a, av, b, bv, tone] in breadth" :key="a">
              <th scope="row">{{ a }}</th><td :class="tone">{{ av }}</td><th scope="row">{{ b }}</th><td :class="tone">{{ bv }}</td>
            </tr>
          </tbody>
        </table>

        <table class="categories">
          <thead>
            <tr><th scope="col">分类</th><th scope="col">涨</th><th scope="col">跌</th><th scope="col">平</th><th scope="col">空</th><th scope="col">额</th></tr>
          </thead>
          <tbody>
            <tr v-for="row in categories" :key="row[0]">
              <th scope="row">{{ row[0] }}</th>
              <td v-for="(v, n) in row.slice(1)" :key="n" :class="['up', 'down', 'flat', 'flat', 'flat'][n]">{{ v }}</td>
            </tr>
          </tbody>
        </table>

        <div class="tape">
          <table>
            <tbody>
              <tr v-for="[time, price, volume, tone] in ticks" :key="time">
                <th scope="row" :class="{ minute: time.length > 3 }">{{ time }}</th><td class="down">{{ price }}</td><td :class="tone">{{ volume }}</td>
              </tr>
            </tbody>
          </table>
          <div class="rail">
            <button type="button" aria-label="pin"><svg width="22" height="30"><path d="M0 13h10" stroke="#808080" stroke-width="2" /><path d="M12 7l4 4h2v-2h4v9h-4v-2h-2l-4 4z" fill="#fff" /></svg></button>
            <button type="button" class="up-arrow" aria-label="scroll up"><svg width="22" height="24"><path d="M6 17v-3h2v-3h2V7h2v4h2v3h4v3z" fill="#b00000" /></svg></button>
          </div>
        </div>
      </aside>
    </main>
  </div>
</template>

<style>
body {
  background: #000;
}
</style>

<style scoped>
.app {
  --cjk: "Noto Sans CJK SC", sans-serif;
  --rule: #b00000;
  display: flex;
  flex-direction: column;
  height: 100vh;
  overflow: hidden;
  background: #000;
  font-family: var(--cjk);
}

button {
  padding: 0;
  border: 0;
  background: none;
  color: #000;
  font: inherit;
}

svg {
  display: block;
}

.titlebar {
  display: flex;
  flex: none;
  align-items: center;
  justify-content: space-between;
  height: 46px;
  background: linear-gradient(90deg, #edf4f7, #eff3fb 45%, #ecf3f6 68%, #eff3fb 85%);
}

.title {
  margin: 0 0 0 -21px;
  font-size: 24px;
  font-weight: 400;
  line-height: 46px;
  white-space: pre;
}

.title span {
  font-family: "Liberation Sans", sans-serif;
  font-size: 23px;
}

.window-buttons {
  display: flex;
}

.window-buttons button {
  display: grid;
  place-items: center;
  width: 92px;
  height: 44px;
}

.window-buttons svg {
  fill: none;
  stroke: #000;
  stroke-width: 2;
}

.menubar {
  display: flex;
  flex: none;
  gap: 30px;
  align-items: center;
  height: 46px;
  padding: 0 10px 0 12px;
  background: #f0f0f0;
  font-size: 24px;
  line-height: 44px;
}

.menubar > button {
  height: 46px;
  padding-bottom: 2px;
}

.mdi-buttons {
  display: flex;
  gap: 16px;
  margin-left: auto;
  padding-top: 16px;
}

.toolbar {
  display: flex;
  flex: none;
  height: 52px;
  border-bottom: 2px solid #a0a0a0;
  background: #f2f2f2;
  box-shadow: 0 2px #696969, 0 4px #b00000;
  font-size: 24px;
  line-height: 32px;
  margin-bottom: 4px;
}

.toolbar button {
  display: flex;
  flex: none;
  align-items: center;
  justify-content: center;
}

.toolbar span {
  padding-bottom: 2px;
}

.toolbar .layout {
  justify-content: flex-start;
  width: 178px;
  gap: 10px;
  padding-left: 6px;
}

.layout .caret {
  margin-left: 6px;
}

.icon {
  width: 32px;
  height: 32px;
  overflow: visible;
}

.caret {
  width: 12px;
  height: 6px;
  background: #000;
  clip-path: polygon(0 0, 100% 0, 50% 100%);
}

.grip {
  flex: none;
  width: 6px;
  height: 34px;
  margin: 8px 8px 0 10px;
  background: repeating-linear-gradient(#b0b0b0 0 2px, transparent 2px 4px);
}

.grip.first {
  margin-left: 8px;
}

.tool,
.split button {
  width: 52px;
}

.split {
  display: flex;
}

.draw-tools {
  display: flex;
  padding-left: 2px;
}

.split .drop {
  width: 26px;
}

.toolbar .rights {
  gap: 12px;
  width: 68px;
  padding-left: 8px;
}

.toolbar .active {
  border: 2px solid #0078d7;
  background: #cfe4f5;
}

.workspace {
  display: grid;
  flex: 1;
  grid-template-columns: minmax(0, 1fr) 86px 546px;
  min-height: 0;
  overflow: hidden;
}

.plot,
.axis {
  width: 100%;
  height: 100%;
  overflow: hidden;
  fill: none;
  shape-rendering: crispEdges;
}

.t {
  font-family: var(--cjk);
  font-feature-settings: "hwid";
  font-size: 24px;
  white-space: pre;
}

.light {
  fill: #dcdcf8;
}

.green {
  fill: #30e330;
}

.plot .up {
  fill: #ff5050;
}

.end {
  text-anchor: end;
}

.dots path {
  stroke: var(--rule);
  stroke-width: 2;
  stroke-dasharray: 2 6;
}

.dots .dense {
  stroke-dasharray: 2 2;
}

.rule {
  fill: none;
  stroke: var(--rule);
  stroke-width: 2;
}

.c-up {
  stroke: #ff5050;
  stroke-width: 2;
}

.c-up rect {
  fill: #000;
}

.c-up .solid {
  fill: #ff5050;
  stroke: none;
}

.c-down path {
  stroke: #30e330;
  stroke-width: 2;
}

.c-down .solid {
  fill: #30e330;
}

.fib path {
  stroke: #ffff80;
  stroke-width: 2;
  stroke-dasharray: 6 6;
}

.fib .whole {
  stroke-dasharray: none;
}

.fib text {
  fill: #ffff80;
}

.cross {
  stroke: #c0c0c0;
  stroke-width: 2;
}

.panel {
  display: flex;
  flex-direction: column;
  min-width: 0;
  overflow: hidden;
  border-right: 2px solid var(--rule);
  color: #dcdcf8;
  font-family: "Liberation Sans", "Noto Sans CJK SC", sans-serif;
  font-size: 29px;
  font-weight: 700;
}

.symbol {
  display: grid;
  flex: none;
  grid-template-columns: 1fr auto 1fr;
  height: 34px;
  margin: 0;
  border-bottom: 2px solid var(--rule);
  font-size: 28px;
  line-height: 34px;
}

.symbol .name {
  display: flex;
  grid-column: 2;
}

.symbol b {
  font-weight: 400;
}

.symbol svg {
  justify-self: end;
  margin-right: 37px;
}

.code {
  margin-right: 10px;
  color: #90acdc;
}

.symbol .yellow {
  color: #ffe000;
  font-size: 34px;
  font-weight: 500;
}

table {
  width: 100%;
  border-collapse: collapse;
  border-spacing: 0;
  table-layout: fixed;
}

th,
td {
  height: 36px;
  padding: 0;
  line-height: 36px;
  text-align: right;
  white-space: nowrap;
}

th {
  color: #90acdc;
  font-size: 34px;
  font-weight: 500;
}

.up {
  color: #ff5050;
}

.down {
  color: #30e330;
}

.figures {
  display: block;
  flex: none;
  overflow: hidden;
  border-bottom: 2px solid var(--rule);
}

.figures tbody {
  display: block;
}

.figures tr {
  display: flex;
  justify-content: space-between;
  padding: 0 9px 0 6px;
}

.quote {
  height: 322px;
  margin-top: 2px;
  border-top: 2px solid var(--rule);
}

.quote th,
.quote td,
.breadth th,
.breadth td {
  line-height: 32px;
}

.orders {
  padding-top: 2px;
}

.orders caption {
  display: block;
  height: 36px;
  padding-right: 4px;
  font-size: 34px;
  font-weight: 500;
  line-height: 36px;
}

.breadth {
  height: 106px;
}

.breadth tr {
  display: grid;
  grid-template-columns: 68px 182px 85px 1fr;
}

.categories {
  flex: none;
}

.categories th:first-child {
  width: 86px;
  padding-right: 6px;
  border-right: 2px solid var(--rule);
}

.categories thead {
  border-bottom: 2px solid var(--rule);
}

.categories tbody {
  border-bottom: 2px solid var(--rule);
}

.categories tbody th {
  color: #dcdcf8;
}

.categories th:nth-child(2) {
  width: 84px;
}

.categories th:nth-child(n + 3) {
  width: 90px;
}

.categories th:last-child {
  width: auto;
  padding-right: 32px;
}

.categories td:last-child {
  padding-right: 6px;
}

.tape {
  display: flex;
  flex: 1;
  min-height: 0;
  padding-top: 2px;
}

.tape table {
  flex: 1;
  width: 0;
  height: 324px;
}

.tape th {
  width: 78px;
  color: #dcdcf8;
  font-size: 24px;
  font-weight: 400;
}

.tape .minute {
  font-size: 29px;
  font-weight: 700;
}

.tape td:nth-child(2) {
  width: 205px;
}

.tape td:last-child {
  padding-right: 5px;
}

.rail {
  width: 22px;
  border-top: 2px solid var(--rule);
  border-left: 2px solid var(--rule);
}

.rail button {
  display: block;
  width: 22px;
  border-bottom: 2px solid var(--rule);
}
</style>
